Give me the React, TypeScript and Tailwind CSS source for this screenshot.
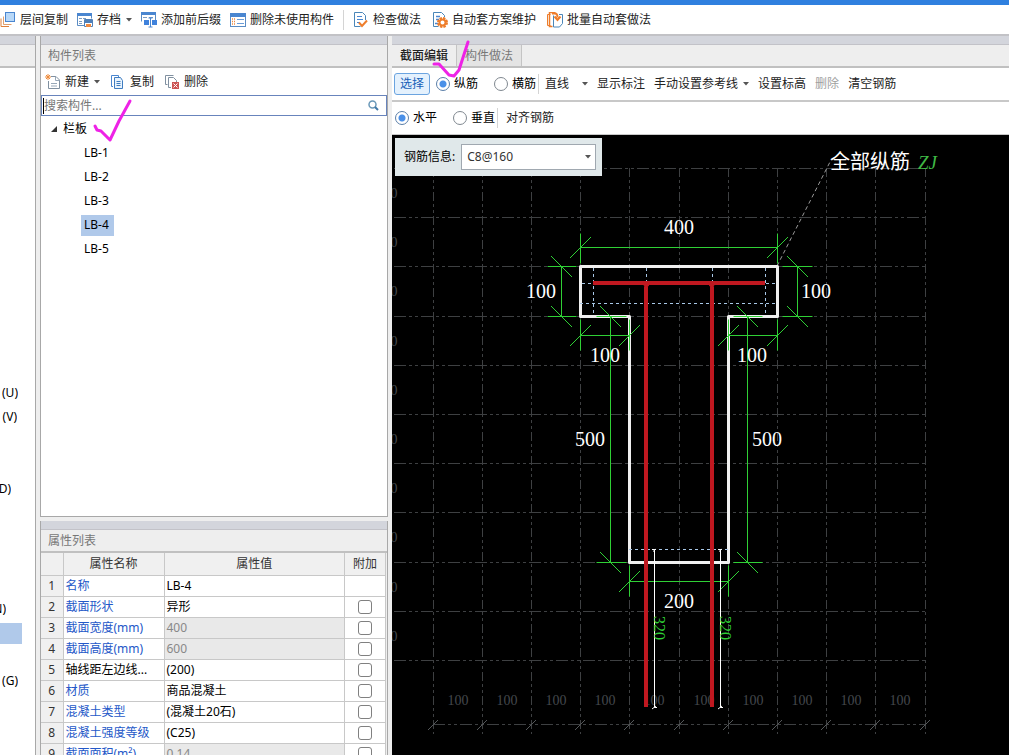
import React from "react";

const FONT = "font-['Noto_Sans','Noto_Sans_CJK_SC',sans-serif]";

function Caret() {
  return (
    <svg width="7" height="4" viewBox="0 0 7 4" className="shrink-0" aria-hidden="true">
      <path d="M1 0h6L4 3.500z" fill="#555" />
    </svg>
  );
}

function Icon({ children }: { children: React.ReactNode }) {
  return (
    <svg width="16" height="16" viewBox="0 0 16 16" fill="none" className="shrink-0" aria-hidden="true">
      {children}
    </svg>
  );
}

function FloorCopyIcon() {
  return (
    <Icon>
      <path d="M1 6.5v8h8" stroke="#e0803a" />
      <path d="M3.500 4.500v8h8" stroke="#e0a070" />
      <rect x="5.500" y="0.500" width="9" height="9" fill="#b8d8f8" stroke="#4a86d0" />
    </Icon>
  );
}

function ArchiveIcon() {
  return (
    <Icon>
      <path d="M0.500 1.500h14v5M0.500 1.500v12h7" stroke="#5a8cc4" />
      <path d="M0 1h15v3H0z" fill="#4a86d0" />
      <path d="M2 6.500h3M6 6.500h3M2 9.500h3M2 11.500h3" stroke="#7a9cc4" />
      <path d="M7.500 7.500h8v7h-8z" fill="#fff" stroke="#5080b8" />
      <path d="M8 7h7v4H8z" fill="#5080b8" />
      <path d="M9 12h5v3H9z" fill="#f08a40" />
    </Icon>
  );
}

function AffixIcon() {
  return (
    <Icon>
      <path d="M0.500 0.500h14v9M0.500 0.500v9" stroke="#5a8cc4" />
      <path d="M0 0h15v3H0z" fill="#4a86d0" />
      <path d="M2 5.500h4M8 5.500h4" stroke="#7a9cc4" />
      <path d="M3 8h5v5H3zM11 8h5v5h-5z" fill="#3f82dc" />
      <path d="M9.500 6v9M7.500 6h4M7.500 15h4" stroke="#4a86d0" />
    </Icon>
  );
}

function UnusedIcon() {
  return (
    <Icon>
      <rect x="0.500" y="1.500" width="15" height="13" fill="#fff" stroke="#5a8cc4" />
      <path d="M0 1h16v4H0z" fill="#4a86d0" />
      <path d="M2 7h3M2 9.500h3M2 12h3" stroke="#f08a40" strokeDasharray="1 1" strokeWidth="1.500" />
      <path d="M7 7.500h7M7 11.500h7" stroke="#6a9cd8" />
    </Icon>
  );
}

function CheckDocIcon() {
  return (
    <Icon>
      <path d="M12.500 8V3.500l-3-3h-8v14h6" fill="#fff" stroke="#4a86b8" />
      <path d="M4 4.500h5M4 7.500h6M4 10.500h3" stroke="#4a86d0" />
      <path d="M6 10.500l3 3.500 5-5.500" stroke="#ee7d2b" strokeWidth="2" />
    </Icon>
  );
}

function GearDocIcon() {
  return (
    <Icon>
      <path d="M12.500 5V3.500l-3-3h-8v14h5" fill="#fff" stroke="#4a86b8" />
      <path d="M4 4.500h4M4 7.500h3M3 11.500h3" stroke="#4a86d0" strokeWidth="1.500" />
      <circle cx="10.500" cy="10.500" r="4.500" stroke="#ee7d2b" strokeWidth="2" strokeDasharray="2.400 1.130" />
      <circle cx="10.500" cy="10.500" r="3" fill="#fff" stroke="#ee7d2b" strokeWidth="2" />
    </Icon>
  );
}

function BatchIcon() {
  return (
    <Icon>
      <path d="M3.500 2.500h-3v11h3" fill="#fff" stroke="#ee7d2b" />
      <path d="M8.500 0.500h-6v14h3" stroke="#ee7d2b" strokeWidth="1.500" />
      <path d="M12 2.500h3.500v9l-3 3.500h-6V3.500" fill="#fff" stroke="#4a86b8" />
      <path d="M5 1.500h3c2 0 2.500 1 2.500 4M7.500 4.500l3 3.500 3-3.500" stroke="#ee7d2b" strokeWidth="2" />
    </Icon>
  );
}

function NewIcon() {
  return (
    <Icon>
      <path d="M6 2.500h5l3.500 3.500v8.500h-11V7" fill="#fff" stroke="#8090a0" />
      <path d="M10.500 2.500v4h4M6 9.500h6M6 12h6" stroke="#98a8b8" />
      <path d="M3 0v6M0 3h6M1 1l4 4M5 1L1 5" stroke="#ee8a3a" />
    </Icon>
  );
}

function CopyIcon() {
  return (
    <Icon>
      <path d="M3 12.500H1.500V1.500h7V3" stroke="#4a86d0" />
      <path d="M4.500 3.500h6l2 3v8h-8z" fill="#e8f3fd" stroke="#3f7cc0" />
      <path d="M6.500 7.500h4M6.500 9.500h4M6.500 11.500h4" stroke="#3f7cc0" />
    </Icon>
  );
}

function DeleteIcon() {
  return (
    <Icon>
      <path d="M3.500 10.500h-2V1.500h8" stroke="#8090a0" />
      <path d="M7 13.500H4.500V3.500h5l3 3V8" fill="#fff" stroke="#8090a0" />
      <path d="M8 8h7v7H8z" fill="#cc5555" />
      <path d="M9.500 9.500l4 4M13.500 9.500l-4 4" stroke="#fff" />
    </Icon>
  );
}

function TopButton({ icon, label, caret }: { icon: React.ReactNode; label: string; caret?: boolean }) {
  return (
    <button type="button" className="flex shrink-0 items-center gap-1 whitespace-nowrap">
      {icon}
      <span>{label}</span>
      {caret && <Caret />}
    </button>
  );
}

function Radio({ name, label, checked }: { name: string; label: string; checked?: boolean }) {
  return (
    <label className="flex shrink-0 items-center gap-1 whitespace-nowrap text-black">
      <input
        type="radio"
        name={name}
        defaultChecked={checked}
        className="h-[14px] w-[14px] appearance-none rounded-full border border-[#808890] bg-white checked:border-[#5a7ea8] checked:bg-[radial-gradient(circle,#4a90e8_3px,#ffffff_4px)]"
      />
      {label}
    </label>
  );
}

const categoryRows: Record<number, { text: string; width: string }> = {
  13: { text: "(U)", width: "w-[18px]" },
  14: { text: "(V)", width: "w-[17px]" },
  17: { text: "(D)", width: "w-[11px]" },
  22: { text: "(N)", width: "w-[6px]" },
  25: { text: "(G)", width: "w-[18px]" },
};

function CategoryPanel() {
  return (
    <aside className="flex w-9 shrink-0 flex-col overflow-hidden border-r border-[#a8a8a8] bg-white">
      <div className="h-[9px] shrink-0 border-b border-[#c2c2c8] bg-[#d3d5dc]" />
      <div className="h-[23px] shrink-0 border-b-2 border-[#c0c0c0] bg-[#eeeeee]" />
      <ul className="pt-px">
        {Array.from({ length: 28 }, (_, i) => {
          const row = categoryRows[i];
          return (
            <li key={i} className="flex h-6 items-center text-black">
              {row && <span className={`flex justify-end overflow-hidden ${row.width}`}>{row.text}</span>}
              {i === 23 && <span className="h-[21px] w-[22px] bg-[#b0c9ea]" />}
            </li>
          );
        })}
      </ul>
    </aside>
  );
}

function PanelTitle({ children }: { children: React.ReactNode }) {
  return (
    <>
      <div className="h-[9px] shrink-0 border-b border-[#c2c2c8] bg-[#d3d5dc]" />
      <h2 className="flex h-[23px] shrink-0 items-center border-b-2 border-[#c0c0c0] bg-[#eeeeee] pl-[7px] text-[#777]">
        {children}
      </h2>
    </>
  );
}

function ComponentList() {
  return (
    <section className="flex min-h-0 flex-[481] flex-col border-x border-b border-[#a8a8a8] bg-white">
      <PanelTitle>构件列表</PanelTitle>
      <div className="flex h-[27px] shrink-0 items-center gap-[10px] pl-1">
        <TopButton icon={<NewIcon />} label="新建" caret />
        <TopButton icon={<CopyIcon />} label="复制" />
        <TopButton icon={<DeleteIcon />} label="删除" />
      </div>
      <div className="flex h-[21px] shrink-0 items-center border border-[#6884bc] pl-px pr-[7px]">
        <span className="h-4 w-px bg-black" />
        <input
          type="text"
          aria-label="搜索构件"
          placeholder="搜索构件..."
          className="min-w-0 flex-1 bg-transparent outline-none placeholder:text-[#777]"
        />
        <svg width="11" height="11" viewBox="0 0 11 11" fill="none" aria-hidden="true">
          <circle cx="4.500" cy="4.500" r="3.500" stroke="#6a98b8" strokeWidth="1.500" />
          <path d="M7 7l3 3" stroke="#3f78a8" strokeWidth="2" />
        </svg>
      </div>
      <ul className="min-h-0 overflow-hidden pt-px text-black">
        <li>
          <div className="flex h-6 items-center gap-[6px] pl-[10px]">
            <svg width="6" height="6" viewBox="0 0 6 6" aria-hidden="true"><path d="M6 0v6H0z" fill="#333" /></svg>
            栏板
          </div>
          <ul>
            {["LB-1", "LB-2", "LB-3", "LB-4", "LB-5"].map((n) => (
              <li key={n} className="flex h-6 items-center pl-10">
                <span className={`flex h-[21px] w-[33px] items-center whitespace-nowrap pl-[3px] ${n === "LB-4" ? "bg-[#b0c9ea]" : ""}`}>
                  {n}
                </span>
              </li>
            ))}
          </ul>
        </li>
      </ul>
    </section>
  );
}

type Row = { name: string; value: string; plain?: boolean; locked?: boolean; noBox?: boolean };
const rows: Row[] = [
  { name: "名称", value: "LB-4", noBox: true },
  { name: "截面形状", value: "异形" },
  { name: "截面宽度(mm)", value: "400", locked: true },
  { name: "截面高度(mm)", value: "600", locked: true },
  { name: "轴线距左边线...", value: "(200)", plain: true },
  { name: "材质", value: "商品混凝土" },
  { name: "混凝土类型", value: "(混凝土20石)" },
  { name: "混凝土强度等级", value: "(C25)" },
  { name: "截面面积(m²)", value: "0.14", locked: true },
];

function PropertyList() {
  return (
    <section className="flex min-h-0 flex-[234] flex-col overflow-hidden border-x border-[#a8a8a8] bg-white">
      <PanelTitle>属性列表</PanelTitle>
      <div className="min-h-0 overflow-hidden bg-[#eeeeee] pr-px">
        <table className="w-full table-fixed border-collapse bg-white">
          <colgroup>
            <col className="w-[22px]" />
            <col className="w-[101px]" />
            <col />
            <col className="w-[41px]" />
          </colgroup>
          <thead>
            <tr className="h-[22px] bg-[#f0f0f0] text-[#333]">
              <th className="border-b border-r border-[#c8c8c8]" />
              <th className="border-b border-r border-[#c8c8c8] p-0 font-normal">属性名称</th>
              <th className="border-b border-r border-[#c8c8c8] p-0 font-normal">属性值</th>
              <th className="border-b border-r border-[#c8c8c8] p-0 font-normal">附加</th>
            </tr>
          </thead>
          <tbody>
            {rows.map((r, i) => (
              <tr key={r.name} className="h-[21px]">
                <td className="border-b border-r border-[#c8c8c8] bg-[#f0f0f0] p-0 text-center text-[#333]">{i + 1}</td>
                <td className={`whitespace-nowrap border-b border-r border-[#c8c8c8] p-0 pl-[2px] ${r.plain ? "text-black" : "text-[#2458c8]"}`}>
                  {r.name}
                </td>
                <td className={`border-b border-r border-[#c8c8c8] p-0 pl-[2px] ${r.locked ? "bg-[#e9e9e9] text-[#888]" : "text-black"}`}>
                  {r.value}
                </td>
                <td className="border-b border-r border-[#c8c8c8] p-0">
                  {!r.noBox && (
                    <input
                      type="checkbox"
                      aria-label={`附加 ${r.name}`}
                      className="mx-auto block h-[14px] w-[14px] appearance-none rounded-[3px] border border-[#808080] bg-white"
                    />
                  )}
                </td>
              </tr>
            ))}
          </tbody>
        </table>
      </div>
    </section>
  );
}

const gridX = [433, 482, 531, 580, 629, 679, 728, 777, 826, 875, 925];
const gridY = [168, 217, 266, 316, 365, 414, 463, 512, 562, 611, 660, 724];

const dimensionLines = [
  "M580 247H777M580 233V263M777 233V263",
  "M561 266V316M547 266H576M547 316H576",
  "M797 266V316M782 266H812M782 316H812",
  "M580 335H629M580 319V350M629 319V350",
  "M728 335H777M728 319V350M777 319V350",
  "M610 316V562M596 316H626M596 562H626",
  "M747 316V562M733 316H762M733 562H762",
  "M629 581H728M629 565V596M728 565V596",
].join("");

const risingTicks = [[580, 247], [777, 247], [580, 335], [629, 335], [728, 335], [777, 335], [629, 581], [728, 581]];
const fallingTicks = [[561, 266], [561, 316], [797, 266], [797, 316], [610, 316], [610, 562], [747, 316], [747, 562]];

const dimensionTexts: [number, number, string][] = [
  [679, 234, "400"], [541, 298, "100"], [816, 298, "100"], [605, 362, "100"],
  [752, 362, "100"], [590, 446, "500"], [767, 446, "500"], [679, 608, "200"],
];

function SectionDrawing() {
  return (
    <svg className="block h-full w-full font-['Liberation_Serif','Noto_Sans_CJK_SC',serif]" fill="none" role="img" aria-label="截面图">
      <g transform="translate(-392 -135)">
        <g stroke="#3e4042" shapeRendering="crispEdges">
          {gridX.map((x) => <path key={x} d={`M${x}.5 168V734`} strokeDasharray="9 3 3 3 3 3" />)}
          {gridY.map((y, i) => <path key={y} d={`M${i === 11 ? 433 : 394} ${y}.5H925`} strokeDasharray="12 3 3 3 3 3" />)}
        </g>
        <g stroke="#55585a">
          {gridX.map((x) => <path key={x} d={`M${x - 5} 730L${x + 5} 720`} />)}
        </g>
        <g fill="#44484d" fontSize="14" textAnchor="middle">
          {gridX.slice(0, -1).map((x) => <text key={x} x={x + 25} y="705">100</text>)}
          {gridY.slice(0, -2).map((y) => <text key={y} x="394" y={y + 30}>0</text>)}
        </g>

        <path d="M777 266L830 162" stroke="#999" strokeDasharray="4 3" />

        <path d="M580.5 266.500H777.500V316.500H728.500V562.500H629.500V316.500H580.500Z" stroke="#f0f0f0" strokeWidth="3" strokeLinejoin="round" />
        <path
          d="M593.5 268V315M646.500 268V283M712.500 268V283M765.500 268V315M580 303.500H777M582 283.500H593M766 283.500H776M629 549.500H728"
          stroke="#a8c8e8"
          strokeDasharray="3 3"
          shapeRendering="crispEdges"
        />

        <path d={dimensionLines} stroke="#2fd035" transform="translate(0.5 0.5)" />
        <g stroke="#2fd035">
          {risingTicks.map(([x, y]) => <path key={`${x}-${y}`} d={`M${x - 10} ${y + 11}L${x + 11} ${y - 10}`} />)}
          {fallingTicks.map(([x, y]) => <path key={`${x}-${y}`} d={`M${x - 10} ${y - 10}L${x + 11} ${y + 11}`} />)}
        </g>

        <path d="M593 283H765M646 287V707M712 287V707" stroke="#c01820" strokeWidth="4" />
        <path d="M643 283L646 289L650 283M708 283L712 289L715 283" fill="#c01820" stroke="#c01820" />

        <path
          d="M652 549.5H654.5V707.500H657M653 551.500L656 549M652 709L656 706M718 549.500H720.500V707.500H723M719 551.500L722 549M718 709L722 706"
          stroke="#fff"
        />

        <g fill="#fff" fontSize="20" textAnchor="middle">
          {dimensionTexts.map(([x, y, t]) => <text key={`${x}-${y}`} x={x} y={y}>{t}</text>)}
        </g>
        <g fill="#2fd035" fontSize="16">
          <text transform="translate(654 616) rotate(90)">320</text>
          <text transform="translate(720 616) rotate(90)">320</text>
        </g>
        <text x="830" y="169" fill="#fff" fontSize="20">全部纵筋</text>
        <text x="918" y="169" fill="#3fb845" fontSize="19" fontStyle="italic">ZJ</text>
      </g>
    </svg>
  );
}

function Separator() {
  return <span className="h-5 w-px shrink-0 bg-[#d4d4d4]" />;
}

function Editor() {
  return (
    <main className="flex min-w-0 flex-1 flex-col bg-white">
      <div className="h-[9px] shrink-0 border-b border-[#c2c2c8] bg-[#d3d5dc]" />
      <div role="tablist" className="flex h-[23px] shrink-0 border-b-2 border-[#c0c0c0] bg-[#eeeeee]">
        <button type="button" role="tab" aria-selected="true" className="border-r border-[#c4c4c4] px-2 font-medium text-[#222]">截面编辑</button>
        <button type="button" role="tab" aria-selected="false" className="border-r border-[#c4c4c4] bg-[#e4e4e4] px-2 text-[#777]">构件做法</button>
      </div>

      <div className="flex h-[34px] shrink-0 items-center whitespace-nowrap border-b-2 border-[#c8c8c8] pl-[2px] text-[#222]">
        <button type="button" className="h-[22px] rounded-[3px] border border-[#6ba4e0] bg-[#e4f1fd] px-[5px] text-[#1760b8]">选择</button>
        <div className="flex items-center gap-4 pl-[6px] pr-[2px]">
          <Radio name="bar" label="纵筋" checked />
          <Radio name="bar" label="横筋" />
        </div>
        <Separator />
        <div className="flex items-center gap-[9px] pl-[6px]">
          <button type="button" className="flex items-center gap-3">直线<Caret /></button>
          <button type="button">显示标注</button>
          <button type="button" className="flex items-center gap-1">手动设置参考线<Caret /></button>
          <button type="button">设置标高</button>
          <button type="button" disabled className="text-[#a0a0a0]">删除</button>
          <button type="button">清空钢筋</button>
        </div>
      </div>

      <div className="flex h-[33px] shrink-0 items-center whitespace-nowrap border-b border-[#c8c8c8] pl-[3px] text-[#222]">
        <div className="flex items-center gap-4 pr-[2px]">
          <Radio name="align" label="水平" checked />
          <Radio name="align" label="垂直" />
        </div>
        <Separator />
        <button type="button" className="pl-2">对齐钢筋</button>
      </div>

      <div className="relative min-h-0 flex-1 overflow-hidden bg-black">
        <SectionDrawing />
        <div className="absolute left-[3px] top-[3px] flex h-[38px] items-center gap-[6px] bg-[#e0e8ea] pl-[9px] pr-[6px] text-black">
          <label htmlFor="rebar">钢筋信息:</label>
          <div className="relative flex items-center">
            <select id="rebar" className="h-[26px] w-[135px] appearance-none border border-[#a0a8b0] bg-white pl-[5px] text-[#333]">
              <option>C8@160</option>
            </select>
            <span className="pointer-events-none absolute right-[5px]"><Caret /></span>
          </div>
        </div>
      </div>
    </main>
  );
}

function PenMarks() {
  return (
    <>
      <svg className="pointer-events-none absolute left-[90px] top-[95px]" width="45" height="50" fill="none" aria-hidden="true">
        <path d="M5 31l2 4 4 1 9 9L29 26 40 6" stroke="#ee22e6" strokeWidth="3" strokeLinecap="round" strokeLinejoin="round" />
      </svg>
      <svg className="pointer-events-none absolute left-[430px] top-[38px]" width="45" height="44" fill="none" aria-hidden="true">
        <path d="M4 26l5 0 10 11 5 1 5-6L38 4" stroke="#ee22e6" strokeWidth="3" strokeLinecap="round" strokeLinejoin="round" />
      </svg>
    </>
  );
}

export default function App() {
  return (
    <div className={`relative flex h-screen flex-col overflow-hidden bg-[#eeeeee] text-xs leading-4 text-[#222] ${FONT}`}>
      <div className="h-[5px] shrink-0 bg-[#2f80df]" />
      <header className="flex h-[31px] shrink-0 items-center gap-[9px] border-b-2 border-[#c2c2c6] bg-white">
        <TopButton icon={<FloorCopyIcon />} label="层间复制" />
        <TopButton icon={<ArchiveIcon />} label="存档" caret />
        <TopButton icon={<AffixIcon />} label="添加前后缀" />
        <TopButton icon={<UnusedIcon />} label="删除未使用构件" />
        <Separator />
        <div className="flex items-center gap-[11px]">
          <TopButton icon={<CheckDocIcon />} label="检查做法" />
          <TopButton icon={<GearDocIcon />} label="自动套方案维护" />
          <TopButton icon={<BatchIcon />} label="批量自动套做法" />
        </div>
      </header>
      <div className="flex min-h-0 flex-1 gap-1">
        <CategoryPanel />
        <div className="flex w-[348px] shrink-0 flex-col gap-1">
          <ComponentList />
          <PropertyList />
        </div>
        <Editor />
      </div>
      <PenMarks />
    </div>
  );
}
